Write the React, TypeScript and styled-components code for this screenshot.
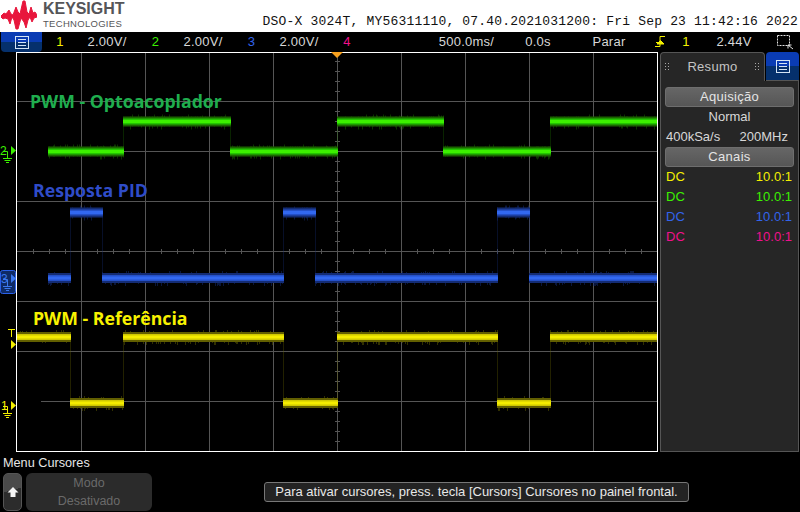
import styled, { createGlobalStyle } from 'styled-components'

const theme = {
  yellow: '#f4f000',
  green: '#3cf000',
  blue: '#3264ec',
  pink: '#f0108c',
  text: '#d8d8d8',
  grid: '#555555',
}

const GlobalStyle = createGlobalStyle`
  html, body {
    margin: 0;
    background: #000;
  }
  * {
    box-sizing: border-box;
  }
`

const Screen = styled.div`
  width: 800px;
  height: 512px;
  overflow: hidden;
  display: flex;
  flex-direction: column;
  background: #000;
  color: ${theme.text};
  font-family: 'Liberation Sans', Arial, sans-serif;
  font-size: 13px;
`

const Header = styled.header`
  height: 32px;
  flex: none;
  background: #fff;
  display: flex;
  padding-left: 1px;
`

const LogoMark = styled.svg`
  width: 36px;
  height: 30px;
  flex: none;
`

const LogoWords = styled.div`
  margin-left: 6px;
  color: #555558;
  display: flex;
  flex-direction: column;
`

const LogoName = styled.div`
  font-size: 16px;
  font-weight: bold;
  line-height: 14px;
  margin-top: 2px;
  letter-spacing: -0.05px;
`

const LogoSub = styled.div`
  font-size: 9.5px;
  line-height: 10px;
  margin-top: 3px;
  letter-spacing: 0.3px;
`

const ScopeId = styled.div`
  margin-left: auto;
  padding: 14px 2px 0 0;
  font-family: 'Liberation Mono', monospace;
  font-size: 13px;
  line-height: 16px;
  letter-spacing: 0.19px;
  color: #111;
  white-space: nowrap;
`

const StatusBar = styled.div`
  height: 20px;
  flex: none;
  display: flex;
  align-items: center;
`

const MenuButton = styled.div`
  width: 41px;
  height: 20px;
  margin: 0 1px 0 1px;
  flex: none;
  display: flex;
  align-items: center;
  justify-content: center;
  border-radius: 0 0 4px 4px;
  background: linear-gradient(#0a3cb4 0 50%, #05306c 50% 100%);
`

const Readout = styled.div<{ $w: number; $color?: string; $gap?: number }>`
  width: ${(p) => p.$w}px;
  margin-left: ${(p) => p.$gap ?? 0}px;
  flex: none;
  text-align: center;
  white-space: nowrap;
  line-height: 20px;
  letter-spacing: 0.25px;
  color: ${(p) => p.$color ?? theme.text};
`

const StatusIcon = styled.svg<{ $gap: number }>`
  margin-left: ${(p) => p.$gap}px;
  flex: none;
`

const Main = styled.div`
  height: 400px;
  flex: none;
  display: flex;
`

const Gutter = styled.svg`
  width: 16px;
  height: 400px;
  flex: none;
`

const Plot = styled.div`
  position: relative;
  width: 642px;
  height: 400px;
  flex: none;
  border: 1px solid #fff;
`

const PlotCanvas = styled.svg`
  display: block;
  width: 640px;
  height: 398px;
`

const Note = styled.div<{ $color: string; $x: number; $y: number }>`
  position: absolute;
  left: ${(p) => p.$x}px;
  top: ${(p) => p.$y}px;
  color: ${(p) => p.$color};
  font-family: 'Open Sans', sans-serif;
  font-size: 17.7px;
  font-weight: 700;
  line-height: 20px;
  white-space: nowrap;
`

const TriggerMark = styled.div`
  position: absolute;
  left: 314px;
  top: -1px;
  width: 0;
  height: 0;
  border-left: 6px solid transparent;
  border-right: 6px solid transparent;
  border-top: 6px solid #f7a11e;
`

const Sidebar = styled.aside`
  width: 139px;
  margin: 0 1px 0 2px;
  flex: none;
  display: flex;
  flex-direction: column;
`

const Tabs = styled.div`
  height: 29px;
  flex: none;
  display: flex;
`

const SummaryTab = styled.div`
  flex: 1;
  display: flex;
  align-items: center;
  justify-content: space-between;
  padding: 0 4px 2px;
  background: #262626;
  border: 1px solid ${theme.grid};
  border-bottom: none;
  border-radius: 4px 4px 0 0;
  color: #c4c4c4;
  letter-spacing: 0.3px;
`

const PanelTab = styled.div`
  width: 33px;
  margin-left: 1px;
  display: flex;
  align-items: center;
  justify-content: center;
  border-radius: 4px 4px 0 0;
  border-bottom: 1px solid ${theme.grid};
  background: linear-gradient(#0a3cb4 0 50%, #05306c 50% 100%);
`

const SideBody = styled.div`
  flex: 1;
  padding: 6px 4px 0;
  background: #262626;
  border: 1px solid ${theme.grid};
  border-top: none;
`

const SideButton = styled.div`
  height: 20px;
  line-height: 17px;
  text-align: center;
  color: #e4e4e4;
  letter-spacing: 0.3px;
  border-radius: 3px;
  border: 1px solid #6e6e6e;
  background: linear-gradient(#666, #565656);
`

const SideRow = styled.div<{ $center?: boolean; $endPad?: number }>`
  height: 20px;
  line-height: 20px;
  padding: 0 ${(p) => p.$endPad ?? 1}px 0 1px;
  display: flex;
  justify-content: ${(p) => (p.$center ? 'center' : 'space-between')};
  white-space: nowrap;
`

const ChannelCell = styled.span<{ $color: string }>`
  color: ${(p) => p.$color};
`

const Footer = styled.footer`
  flex: 1;
  padding: 4px 0 0 3px;
  display: flex;
  flex-direction: column;
`

const FooterTitle = styled.div`
  height: 15px;
  line-height: 15px;
  font-size: 12.7px;
  color: #e6e6e6;
`

const SoftKeys = styled.div`
  margin-top: 2px;
  height: 38px;
  display: flex;
  align-items: flex-start;
`

const UpKey = styled.div`
  width: 19px;
  height: 38px;
  flex: none;
  display: flex;
  align-items: center;
  justify-content: center;
  border-radius: 5px;
  border: 1px solid #555;
  background: linear-gradient(165deg, #4a4a4a 0 45%, #2c2c2c 45% 100%);
`

const ModeKey = styled.div`
  width: 126px;
  height: 38px;
  margin-left: 4px;
  flex: none;
  padding-top: 1px;
  border-radius: 6px;
  background: #2b2b2b;
  color: #6a6a6a;
  text-align: center;
  font-size: 12.5px;
  line-height: 18px;
`

const Toast = styled.div`
  width: 425px;
  height: 20px;
  margin: 9px 0 0 112px;
  flex: none;
  border: 1px solid #777;
  border-radius: 3px;
  background: #232323;
  color: #e8e8e8;
  text-align: center;
  line-height: 18px;
  white-space: nowrap;
`

type Segment = [number, number, number]

function noisePath(segments: Segment[], seed: number) {
  let s = seed
  const rand = () => {
    s = (s * 16807) % 2147483647
    return s / 2147483647
  }
  let d = ''
  for (const [a, b, y] of segments) {
    for (let x = a; x < b; x += 1) {
      const up = rand() > 0.88 ? 1 + Math.floor(rand() * 2) : 0
      const down = rand() > 0.82 ? 1 + Math.floor(rand() * 3) : 0
      if (up + down > 0) {
        d += `M${x + 0.5} ${y - 5 - up}V${y + 5 + down}`
      }
    }
  }
  return d
}

function edgePath(segments: Segment[]) {
  return segments
    .slice(1)
    .map((seg, i) => `M${seg[0] + 0.5} ${segments[i][2]}V${seg[2]}`)
    .join('')
}

const traces = [
  {
    id: 'green',
    outer: '#1a6400',
    mid: '#22c400',
    core: '#3cf000',
    segments: [
      [48, 124, 151.5],
      [123, 231, 121.5],
      [230, 338, 151.5],
      [337, 444, 121.5],
      [443, 551, 151.5],
      [550, 657, 121.5],
    ] as Segment[],
  },
  {
    id: 'blue',
    outer: '#142c74',
    mid: '#2450c8',
    core: '#3268f0',
    segments: [
      [48, 71, 278],
      [70, 103, 212.5],
      [102, 284, 278],
      [283, 316, 212.5],
      [315, 498, 278],
      [497, 530, 212.5],
      [529, 657, 278],
    ] as Segment[],
  },
  {
    id: 'yellow',
    outer: '#625f00',
    mid: '#cfc800',
    core: '#f4ec00',
    segments: [
      [17, 71, 337],
      [70, 124, 403],
      [123, 284, 337],
      [283, 338, 403],
      [337, 498, 337],
      [497, 551, 403],
      [550, 657, 337],
    ] as Segment[],
  },
]

const gridX = [81, 145, 209, 273, 337, 401, 465, 529, 593]
const gridRows: [number, number][] = [
  [101, 17],
  [151, 48],
  [201, 17],
  [251, 17],
  [301, 17],
  [351, 17],
  [401, 41],
]

function GridLines() {
  const hTicks: number[] = []
  for (let x = 33; x < 657; x += 16) hTicks.push(x)
  const vTicks: number[] = []
  for (let y = 61; y < 451; y += 10) vTicks.push(y)
  return (
    <g stroke={theme.grid} strokeWidth="1">
      {gridX.map((x) => (
        <line key={x} x1={x + 0.5} x2={x + 0.5} y1="53" y2="451" />
      ))}
      {gridRows.map(([y, from]) => (
        <line key={y} x1={from} x2="657" y1={y + 0.5} y2={y + 0.5} />
      ))}
      {hTicks.map((x) => (
        <line key={x} x1={x + 0.5} x2={x + 0.5} y1="249" y2="254" />
      ))}
      {vTicks.map((y) => (
        <line key={y} x1="335" x2="340" y1={y + 0.5} y2={y + 0.5} />
      ))}
    </g>
  )
}

function Trace({ outer, mid, core, segments, seed }: {
  outer: string
  mid: string
  core: string
  segments: Segment[]
  seed: number
}) {
  return (
    <g>
      <path d={edgePath(segments)} stroke={outer} strokeOpacity="0.35" fill="none" />
      <path d={noisePath(segments, seed)} stroke={outer} strokeOpacity="0.5" fill="none" />
      {segments.map(([a, b, y]) => (
        <g key={a}>
          <rect x={a} y={y - 5} width={b - a} height="10" fill={outer} />
          <rect x={a} y={y - 3} width={b - a} height="6" fill={mid} />
          <rect x={a} y={y - 1.5} width={b - a} height="3" fill={core} />
        </g>
      ))}
    </g>
  )
}

function ListIcon() {
  return (
    <svg width="14" height="13" viewBox="0 0 14 13" fill="none" stroke="#d4e4f4">
      <rect x="0.5" y="0.5" width="13" height="12" />
      <path d="M3 3.5H11M3 6.5H11M3 9.5H11" />
    </svg>
  )
}

function GripDots() {
  return (
    <svg width="5" height="7" viewBox="0 0 5 7" fill="#a8a8a8">
      {[0, 3, 6].map((y) => (
        <g key={y}>
          <rect x="0" y={y} width="1" height="1" />
          <rect x="3" y={y} width="1" height="1" />
        </g>
      ))}
    </svg>
  )
}

function GroundMark({ y, color }: { y: number; color: string }) {
  return (
    <g stroke={color} fill="none">
      <path d={`M3 ${y + 1.5}H7.5V${y + 8}`} />
      <path d={`M3 ${y + 8.5}H12M4.5 ${y + 10.5}H10.5M6 ${y + 12.5}H9`} />
    </g>
  )
}

function Arrow({ y, color }: { y: number; color: string }) {
  return <path d={`M11 ${y - 4.5}L16 ${y}L11 ${y + 4.5}Z`} fill={color} />
}

function ChannelMarkers() {
  return (
    <Gutter viewBox="0 52 16 400">
      <text x="0" y="155" fontSize="12" fill="#3cf000" fontFamily="Liberation Sans">2</text>
      <Arrow y={150.5} color="#3cf000" />
      <GroundMark y={150} color="#3cf000" />

      <rect x="0.5" y="270.5" width="15" height="23" rx="2" fill="#0e2a66" stroke="#2a60e8" />
      <text x="1" y="283" fontSize="12" fill="#3a78f0" fontFamily="Liberation Sans">3</text>
      <Arrow y={278.5} color="#3a78f0" />
      <GroundMark y={278} color="#3a78f0" />

      <path d="M8 329.5H15M11.5 330V337" stroke="#f4f000" fill="none" />
      <Arrow y={344.5} color="#f4f000" />

      <text x="1" y="410" fontSize="12" fill="#f4f000" fontFamily="Liberation Sans">1</text>
      <Arrow y={405.5} color="#f4f000" />
      <GroundMark y={405} color="#f4f000" />
    </Gutter>
  )
}

const channels = [
  { color: theme.yellow },
  { color: theme.green },
  { color: theme.blue },
  { color: theme.pink },
]

export default function App() {
  return (
    <Screen>
      <GlobalStyle />
      <Header>
        <LogoMark viewBox="0 0 36 30">
          <path
            d="M0 16L3 13L5 14L8 10L10 14L12 15L15 7L17 12L19 14L22 1L24 1L26 12L28 14L30 7L32 13L34 12L36 15L36 17L33 18L31 22L29 17L27 20L25 28L23 22L20 18L17 29L15 29L13 20L11 17L9 24L7 19L4 18L2 19L0 17Z"
            fill="#e8163c"
            stroke="#e8163c"
            strokeLinejoin="round"
          />
        </LogoMark>
        <LogoWords>
          <LogoName>KEYSIGHT</LogoName>
          <LogoSub>TECHNOLOGIES</LogoSub>
        </LogoWords>
        <ScopeId>DSO-X 3024T, MY56311110, 07.40.2021031200: Fri Sep 23 11:42:16 2022</ScopeId>
      </Header>

      <StatusBar>
        <MenuButton>
          <ListIcon />
        </MenuButton>
        <Readout $w={34} $color={theme.yellow}>1</Readout>
        <Readout $w={60}>2.00V/</Readout>
        <Readout $w={37} $color={theme.green}>2</Readout>
        <Readout $w={58}>2.00V/</Readout>
        <Readout $w={39} $color={theme.blue}>3</Readout>
        <Readout $w={56}>2.00V/</Readout>
        <Readout $w={40} $color={theme.pink}>4</Readout>
        <Readout $w={67} $gap={66}>500.0ms/</Readout>
        <Readout $w={40} $gap={18}>0.0s</Readout>
        <Readout $w={40} $gap={31}>Parar</Readout>
        <StatusIcon $gap={26} width="10" height="14" viewBox="0 0 10 14" fill="none" stroke={theme.yellow}>
          <path d="M0 11.5H5V1.5H10M1 7.5H7" />
          <path d="M2 9L5.5 5.5L9 9Z" fill={theme.yellow} />
        </StatusIcon>
        <Readout $w={20} $gap={11} $color={theme.yellow}>1</Readout>
        <Readout $w={50} $gap={13}>2.44V</Readout>
        <StatusIcon $gap={18} width="18" height="15" viewBox="0 0 18 15" fill="none" stroke="#e4e4e4">
          <rect x="0.5" y="0.5" width="12" height="10" strokeDasharray="2 1" />
          <path d="M11 10L16 14M11 10V13.5M11 10H14.5" />
        </StatusIcon>
      </StatusBar>

      <Main>
        <ChannelMarkers />
        <Plot>
          <PlotCanvas viewBox="17 53 640 398">
            <GridLines />
            {traces.map((t, i) => (
              <Trace key={t.id} outer={t.outer} mid={t.mid} core={t.core} segments={t.segments} seed={1234 + i * 977} />
            ))}
          </PlotCanvas>
          <TriggerMark />
          <Note $color="#1fae4e" $x={13} $y={38}>PWM - Optoacoplador</Note>
          <Note $color="#2f4cc8" $x={16} $y={127}>Resposta PID</Note>
          <Note $color="#f8f200" $x={16} $y={255}>PWM - Referência</Note>
        </Plot>
        <Sidebar>
          <Tabs>
            <SummaryTab>
              <GripDots />
              Resumo
              <GripDots />
            </SummaryTab>
            <PanelTab>
              <ListIcon />
            </PanelTab>
          </Tabs>
          <SideBody>
            <SideButton>Aquisição</SideButton>
            <SideRow $center>Normal</SideRow>
            <SideRow $endPad={6}>
              <span>400kSa/s</span>
              <span>200MHz</span>
            </SideRow>
            <SideButton>Canais</SideButton>
            {channels.map((c) => (
              <SideRow key={c.color} $endPad={2}>
                <ChannelCell $color={c.color}>DC</ChannelCell>
                <ChannelCell $color={c.color}>10.0:1</ChannelCell>
              </SideRow>
            ))}
          </SideBody>
        </Sidebar>
      </Main>

      <Footer>
        <FooterTitle>Menu Cursores</FooterTitle>
        <SoftKeys>
          <UpKey>
            <svg width="12" height="12" viewBox="0 0 12 12" fill="#f4f4f4">
              <path d="M6 1L11.5 6.5H8.5V11H3.5V6.5H0.5Z" />
            </svg>
          </UpKey>
          <ModeKey>
            Modo
            <br />
            Desativado
          </ModeKey>
          <Toast>Para ativar cursores, press. tecla [Cursors] Cursores no painel frontal.</Toast>
        </SoftKeys>
      </Footer>
    </Screen>
  )
}
